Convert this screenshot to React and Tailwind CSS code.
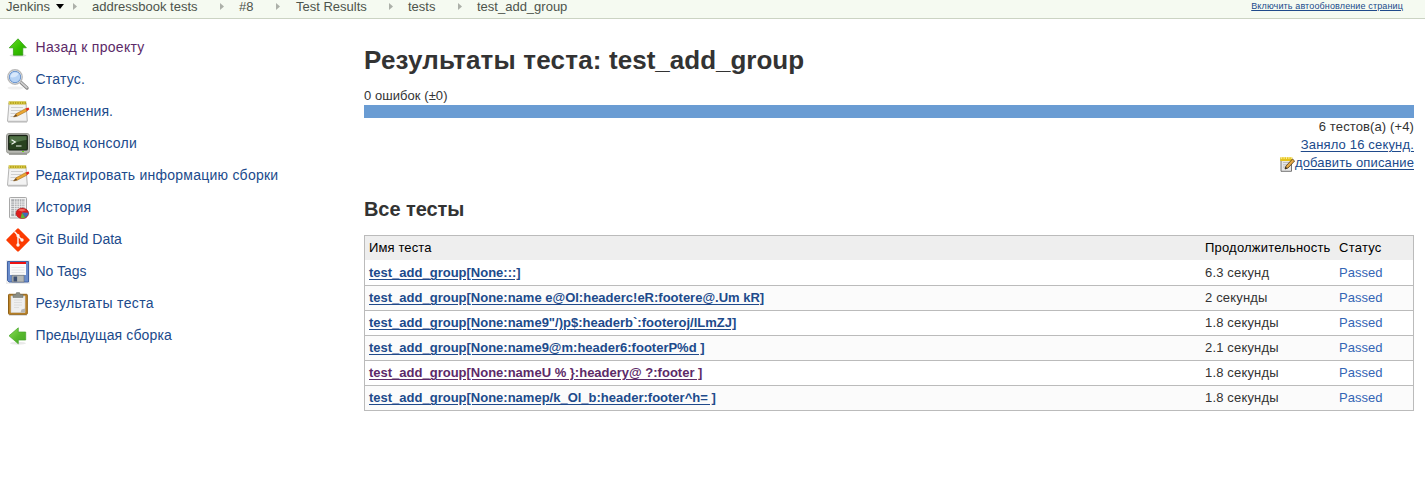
import React from 'react';

const UpIcon = ({ left }) => (
  <svg viewBox="0 0 24 24" className="size-6 shrink-0">
    <defs>
      <linearGradient id={left ? 'gl' : 'gu'} x1="0" y1="0" x2="1" y2="1">
        <stop offset="0" stopColor={left ? '#8fe05a' : '#6fdc2c'} />
        <stop offset=".55" stopColor={left ? '#56b92c' : '#35c000'} />
        <stop offset="1" stopColor={left ? '#4aa82a' : '#2aa500'} />
      </linearGradient>
    </defs>
    {left ? (
      <>
        <ellipse cx="12" cy="19.3" rx="8" ry="1.5" fill="#e9e9e9" />
        <path d="M3 11.8 12.3 3.8V8H19.7V16H12.3V19.8Z" fill="url(#gl)" stroke="#46a329" strokeWidth=".7" />
      </>
    ) : (
      <>
        <ellipse cx="12" cy="19.5" rx="8.5" ry="1.3" fill="#dedede" />
        <path d="M12 2.8 20.4 11.8H16.8V19.2H7.4V11.8H3.2Z" fill="url(#gu)" stroke="#2c9a10" strokeWidth=".7" />
      </>
    )}
  </svg>
);

const SearchIcon = () => (
  <svg viewBox="0 0 24 24" className="size-6 shrink-0">
    <ellipse cx="9.5" cy="20" rx="8" ry="1.6" fill="#efefef" />
    <path d="M15 14.5 21 20" stroke="#858585" strokeWidth="3.4" strokeLinecap="round" />
    <path d="M15 14.3 20.8 19.6" stroke="#d0d0d0" strokeWidth="1.7" strokeLinecap="round" />
    <circle cx="9" cy="9" r="7.2" fill="#fff" stroke="#b9b9b9" strokeWidth="1.4" />
    <circle cx="9" cy="9" r="5.7" fill="#b5d2f5" stroke="#5a88c6" strokeWidth=".9" />
    <path d="M4.5 9C4.5 5 9 3 12.5 5.5 12 8 8 10.5 4.5 9Z" fill="#d8e8fb" />
  </svg>
);

const NoteIcon = () => (
  <svg viewBox="0 0 24 24" className="size-6 shrink-0">
    <path d="M2 21.5H21V23H2Z" fill="#d9d9d9" />
    <path d="M3 3H20L21.3 21.3H1.5Z" fill="#f3f3f3" stroke="#ababab" strokeWidth=".9" />
    <path d="M5 7.5H17M5 10.5H15M4.5 13.5H11M4.5 16.5H9" stroke="#cfcfcf" strokeWidth="1" />
    <path d="M2.6 1.4H20.2V4.4H2.6Z" fill="#b7a41c" />
    <path d="M3.6 1V4.6M6 1V4.6M8.4 1V4.6M10.8 1V4.6M13.2 1V4.6M15.6 1V4.6M18 1V4.6" stroke="#e2d55a" strokeWidth=".9" />
    <path d="M7.5 17 10 13.8 19.6 8.6 21.2 11 11.3 16.2Z" fill="#eba733" stroke="#94621a" strokeWidth=".5" />
    <path d="M7.5 17 10 14.2 11.2 16Z" fill="#5e4630" />
    <path d="M19.6 8.6 22.4 7.5 23.4 9.3 21.2 11Z" fill="#e5261c" />
  </svg>
);

const ConsoleIcon = () => (
  <svg viewBox="0 0 24 24" className="size-6 shrink-0">
    <path d="M3 20H21V22.8H3Z" fill="#8b8c87" />
    <rect x=".5" y="1.5" width="23" height="19.7" rx="2.5" fill="#b9bab4" stroke="#989993" />
    <rect x="2.7" y="3.4" width="18.6" height="14.6" rx="1" fill="#28421f" stroke="#172014" strokeWidth="1.2" />
    <path d="M3.5 4.2H20.5V8C14 8.5 10 11 3.5 11Z" fill="#4f7045" />
    <path d="M5.5 7.8 9.3 10 5.5 12.2M10 14H15.5" stroke="#f2f8ef" strokeWidth="1.2" fill="none" />
    <rect x="16" y="19" width="2" height="1" fill="#6bd31a" />
  </svg>
);

const HistoryIcon = () => (
  <svg viewBox="0 0 24 24" className="size-6 shrink-0">
    <rect x="3.5" y="1.5" width="17" height="20.5" rx=".8" fill="#f3f3f3" stroke="#a8a8a8" />
    <rect x="5.2" y="3.2" width="13.8" height="17" fill="#a9abae" />
    <path d="M8.6 3.2V20M11 3.2V20M13.4 3.2V20M15.8 3.2V20M18.2 3.2V20M5 6H19M5 8.2H19M5 10.4H19M5 12.6H19M5 14.8H19M5 17H19" stroke="#f2f2f2" strokeWidth=".8" />
    <ellipse cx="16.3" cy="17.3" rx="6.3" ry="5.2" fill="#df1c1c" stroke="#9d1818" strokeWidth=".6" />
    <path d="M12 14.2C14 12.5 18 12.6 20 14.2L16 15.6Z" fill="#f46b61" />
    <path d="M16 16.5 14.6 22C17 22.6 18.6 22 19.4 21.4Z" fill="#57b83a" />
    <path d="M16 16.5 22.4 16.8C22.4 19 21 20.6 19.4 21.4Z" fill="#3d6fb8" />
  </svg>
);

const GitIcon = () => (
  <svg viewBox="0 0 24 24" className="size-6 shrink-0">
    <rect x="3.4" y="3.4" width="17.2" height="17.2" rx="1.2" transform="rotate(45 12 12)" fill="#fb3b02" />
    <path d="M8.4 3.6 12 7.4V17M12 8 16 12" stroke="#fff5f0" strokeWidth="1.4" fill="none" />
    <circle cx="12" cy="7.7" r="1.6" fill="#fff5f0" />
    <circle cx="12" cy="17" r="1.7" fill="#fff5f0" />
    <circle cx="16" cy="12" r="1.7" fill="#fff5f0" />
  </svg>
);

const FloppyIcon = () => (
  <svg viewBox="0 0 24 24" className="size-6 shrink-0">
    <rect width="24" height="24" fill="#eeeeee" />
    <path d="M1.5 1.5H22.5V22H3L1.5 20.5Z" fill="#6a8dcc" stroke="#4262a2" />
    <rect x="4" y="2" width="16" height="13" fill="#fafafa" />
    <rect x="4" y="2" width="16" height="2" fill="#ee1111" />
    <path d="M5.5 7.5H18.5M5.5 10H18.5M5.5 12.5H18.5" stroke="#dfe1e5" strokeWidth=".8" />
    <rect x="6" y="15.2" width="12" height="6.8" fill="#b5b8b5" stroke="#6b7177" strokeWidth=".6" />
    <rect x="7.5" y="16.5" width="3.6" height="5" fill="#3c4f72" />
  </svg>
);

const ClipIcon = () => (
  <svg viewBox="0 0 24 24" className="size-6 shrink-0">
    <path d="M3 22.5H21V23.7H3Z" fill="#cfcfcf" />
    <rect x="2.5" y="2.3" width="18.8" height="20" rx=".8" fill="#bf862a" stroke="#8f6016" />
    <path d="M5 4H19V20.5H5Z" fill="#efefef" stroke="#d0d0d0" strokeWidth=".6" />
    <path d="M8 8H16M8 10.5H16M8 13H16M8 15.5H13" stroke="#dadada" strokeWidth=".9" />
    <path d="M14.5 20.5 15.5 17.5 19 16.5V20.5Z" fill="#b5b5b5" />
    <path d="M7 5.5V2.6H9.7L10.5.6H13.5L14.3 2.6H17V5.5Z" fill="#8b8e86" stroke="#6b6e67" strokeWidth=".5" />
  </svg>
);

const EditIcon = () => (
  <svg viewBox="0 0 15 16" className="mt-[2px] h-4 w-[15px] shrink-0">
    <path d="M1 2.5H11.5V15.3H1Z" fill="#e7e7e7" stroke="#666" strokeWidth=".9" />
    <path d="M3 6.5H9M3 8.8H8M3 11.1H6" stroke="#b4b4b4" strokeWidth=".8" />
    <path d="M.3 1.2H12.3V5H.3Z" fill="#e5c31c" />
    <path d="M1.7 1V3M4.1 1V3M6.5 1V3M8.9 1V3M11.3 1V3" stroke="#fff3a0" strokeWidth=".9" />
    <path d="M5 13 6 10 12.5 3 14.6 5 8 12Z" fill="#e5aa48" stroke="#4f3510" strokeWidth=".8" />
    <path d="M5 13 5.7 10.8 7.3 12.3Z" fill="#222" />
  </svg>
);

const Chevron = ({ className = '' }) => (
  <svg viewBox="0 0 4 7" className={`h-[7px] w-1 shrink-0 ${className}`}>
    <path d="M0 0 4 3.5 0 7Z" fill="#acb0a9" />
  </svg>
);

const nav = [
  [<UpIcon />, 'Назад к проекту', 'text-[#5c2a68] tracking-[0.29px]'],
  [<SearchIcon />, 'Статус.', 'text-[#204a8b] tracking-[0.2px]'],
  [<NoteIcon />, 'Изменения.', 'text-[#204a8b] tracking-[0.12px]'],
  [<ConsoleIcon />, 'Вывод консоли', 'text-[#204a8b] tracking-[0.22px]'],
  [<NoteIcon />, 'Редактировать информацию сборки', 'text-[#204a8b] tracking-[0.24px]'],
  [<HistoryIcon />, 'История', 'text-[#204a8b] tracking-[0.2px]'],
  [<GitIcon />, 'Git Build Data', 'text-[#204a8b]'],
  [<FloppyIcon />, 'No Tags', 'text-[#204a8b]'],
  [<ClipIcon />, 'Результаты теста', 'text-[#204a8b] tracking-[0.36px]'],
  [<UpIcon left />, 'Предыдущая сборка', 'text-[#204a8b] tracking-[0.12px]'],
];

const tests = [
  ['test_add_group[None:::]', '6.3 секунд'],
  ['test_add_group[None:name e@Ol:headerc!eR:footere@.Um kR]', '2 секунды'],
  ['test_add_group[None:name9"/)p$:headerb`:footeroj/lLmZJ]', '1.8 секунды'],
  ['test_add_group[None:name9@m:header6:footerP%d ]', '2.1 секунды'],
  ['test_add_group[None:nameU % }:headery@ ?:footer ]', '1.8 секунды'],
  ['test_add_group[None:namep/k_Ol_b:header:footer^h= ]', '1.8 секунды'],
];

const link = 'text-[#204a8b] underline underline-offset-2';

export default function App() {
  return (
    <div className="h-[498px] w-[1425px] overflow-hidden bg-white font-['Liberation_Sans',Arial,sans-serif] text-[13px] text-[#333]">
      <header className="flex h-[19px] items-start justify-between border-b border-[#cbd3c3] bg-[#f5faf1] text-[#4d544c]">
        <nav className="flex h-[13px] items-center whitespace-nowrap pl-[6px] leading-[13px]">
          <span className="w-[50px]">Jenkins</span>
          <svg viewBox="0 0 8 5" className="h-[5px] w-2 shrink-0"><path d="M0 0H8L4 5Z" fill="#000" /></svg>
          <Chevron className="ml-[9px]" />
          <span className="ml-[15px] w-[128px]">addressbook tests</span>
          <Chevron />
          <span className="ml-[15px] w-[37px]">#8</span>
          <Chevron />
          <span className="ml-[16px] w-[93px]">Test Results</span>
          <Chevron />
          <span className="ml-[15px] w-[50px]">tests</span>
          <Chevron />
          <span className="ml-[15px]">test_add_group</span>
        </nav>
        <a className="mr-[22px] text-[9px] leading-3 tracking-[0.13px] text-[#204a8b] underline">Включить автообновление страниц</a>
      </header>

      <div className="flex">
        <aside className="w-[364px] pl-[6px] pt-[17px]">
          {nav.map(([icon, label, style], i) => (
            <a key={i} className={`flex h-8 items-start gap-[5.5px] text-[14px] leading-[22px] ${style}`}>
              {icon}
              <span className="whitespace-nowrap">{label}</span>
            </a>
          ))}
        </aside>

        <main className="w-[1050px]">
          <h1 className="mt-[25px] text-[26px] font-bold leading-8">
            <span className="tracking-[0.2px]">Результаты теста: </span>test_add_group
          </h1>
          <div className="mt-[11px] h-[18px] leading-[18px] tracking-[0.06px]">0 ошибок (±0)</div>
          <div className="h-[13px] bg-[#6a9cd3]" />
          <div className="flex flex-col items-end leading-[18px]">
            <span className="tracking-[0.12px]">6 тестов(а) (+4)</span>
            <a className={`tracking-[0.17px] ${link}`}>Заняло 16 секунд.</a>
            <a className="flex h-[18px] items-start">
              <EditIcon />
              <span className={`tracking-[0.14px] ${link}`}>добавить описание</span>
            </a>
          </div>
          <h2 className="mt-[25px] text-[20px] font-bold leading-6 tracking-[-0.08px]">Все тесты</h2>
          <div className="mt-[14px] h-[176px] border border-[#bbb]">
            <div className="flex h-[25px] border-b border-white bg-[#eee] leading-6 text-black">
              <span className="w-[836px] pl-1 tracking-[0.12px]">Имя теста</span>
              <span className="w-[134px] pl-1 tracking-[0.2px]">Продолжительность</span>
              <span className="pl-1 tracking-[0.25px]">Статус</span>
            </div>
            {tests.map(([name, time], i) => (
              <div key={i} className={`flex leading-6 ${i < 5 ? 'h-[25px] border-b border-[#bbb]' : 'h-6'} ${i % 2 ? 'bg-[#fbfbfb]' : ''}`}>
                <span className="w-[836px] pl-1">
                  <a className={`font-bold underline underline-offset-2 ${i === 4 ? 'text-[#5c2a68]' : 'text-[#204a8b]'}`}>{name}</a>
                </span>
                <span className="w-[134px] pl-1 tracking-[0.17px]">{time}</span>
                <span className="pl-1 text-[#3465b5]">Passed</span>
              </div>
            ))}
          </div>
        </main>
      </div>
    </div>
  );
}
